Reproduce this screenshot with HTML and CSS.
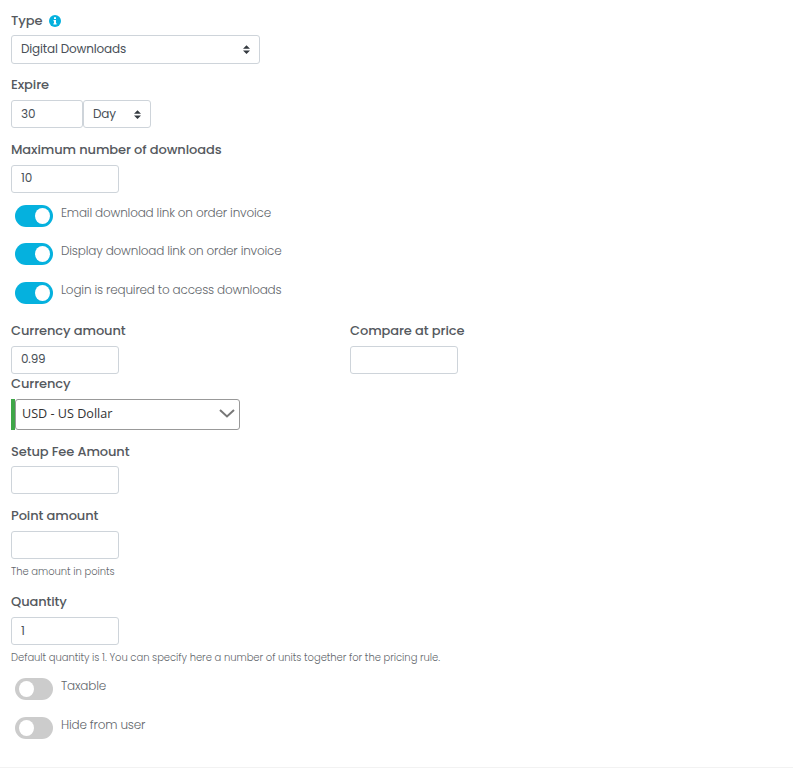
FILE: index.html
```
<!DOCTYPE html>
<html lang="en">
<head>
    <meta charset="UTF-8">
    <meta name="viewport" content="width=device-width, initial-scale=1.0">
    <title>Product Pricing</title>
    <link rel="stylesheet" href="styles.css">
</head>
<body>
    <form class="pricing-form">
        <div class="form-group">
            <label class="title type-title" for="type">Type
                <svg class="info" viewBox="0 0 12 12">
                    <circle cx="6" cy="6" r="6" fill="#05b1de"/>
                    <path d="M5 2.3h2v1.8H5zM4.5 5H7v3.2h.6v1.2H4.4V8.2H5v-2h-.5z" fill="#fff"/>
                </svg>
            </label>
            <div class="select type-select" id="type">
                <span>Digital Downloads</span>
                <svg class="arrows" viewBox="0 0 8 10"><path d="M4 0L8 4H0zM0 6h8L4 10z"/></svg>
            </div>
        </div>

        <div class="form-group expire">
            <label class="title" for="expire">Expire</label>
            <div class="input-row">
                <input type="text" class="small" id="expire" value="30">
                <div class="select day-select">
                    <span>Day</span>
                    <svg class="arrows" viewBox="0 0 8 10"><path d="M4 0L8 4H0zM0 6h8L4 10z"/></svg>
                </div>
            </div>
        </div>

        <div class="form-group">
            <label class="title" for="maxDownloads">Maximum number of downloads</label>
            <input type="text" class="raised" id="maxDownloads" value="10">
        </div>

        <div class="switches">
            <label class="switch-row"><span class="switch on"></span>Email download link on order invoice</label>
            <label class="switch-row"><span class="switch on"></span>Display download link on order invoice</label>
            <label class="switch-row"><span class="switch on"></span>Login is required to access downloads</label>
        </div>

        <div class="columns">
            <div class="column">
                <label class="title" for="amount">Currency amount</label>
                <input type="text" class="raised" id="amount" value="0.99">
            </div>
            <div class="column">
                <label class="title" for="compare">Compare at price</label>
                <input type="text" id="compare">
            </div>
        </div>

        <div class="form-group">
            <label class="title" for="currency">Currency</label>
            <div class="combo" id="currency">
                <div class="combo-box">
                    <span>USD - US Dollar</span>
                    <svg class="chevron" viewBox="0 0 16 9"><path d="M1 1l7 6.5L15 1"/></svg>
                </div>
            </div>
        </div>

        <div class="form-group setup">
            <label class="title setup-title" for="setupFee">Setup Fee Amount</label>
            <input type="text" id="setupFee">
        </div>

        <div class="form-group">
            <label class="title" for="points">Point amount</label>
            <input type="text" id="points">
            <small>The amount in points</small>
        </div>

        <div class="form-group">
            <label class="title" for="quantity">Quantity</label>
            <input type="text" id="quantity" value="1">
            <small>Default quantity is 1. You can specify here a number of units together for the pricing rule.</small>
        </div>

        <div class="switches bottom">
            <label class="switch-row"><span class="switch"></span>Taxable</label>
            <label class="switch-row"><span class="switch"></span>Hide from user</label>
        </div>
    </form>
</body>
</html>
```

FILE: styles.css
```
* {
    box-sizing: border-box;
}

body {
    margin: 0;
    background-color: #fff;
    font-family: Poppins, Inter, sans-serif;
    font-size: 12px;
    font-weight: 300;
    color: #63676c;
}

.pricing-form {
    height: 768px;
    padding: 10px 11px 0;
    border-bottom: 1px solid #f2f2f2;
}

.title {
    display: flex;
    align-items: center;
    height: 20px;
    margin-bottom: 5px;
    font-size: 13px;
    font-weight: 500;
    letter-spacing: -0.1px;
    color: #55595e;
    white-space: nowrap;
}

.type-title, .setup-title {
    padding-top: 2px;
}

.info {
    width: 12px;
    height: 12px;
    margin-left: 7px;
}

input, .select {
    display: flex;
    align-items: center;
    width: 108px;
    height: 28px;
    padding: 0 9px 1px;
    border: 1px solid #ced4da;
    border-radius: 3px;
    background-color: #fff;
    font-family: inherit;
    font-size: 12px;
    font-weight: 400;
    letter-spacing: -0.17px;
    color: #495057;
}

input.raised {
    padding-bottom: 2px;
}

.select {
    justify-content: space-between;
}

.type-select {
    width: 249px;
    height: 29px;
}

.day-select {
    width: 68px;
    padding-bottom: 0;
}

.arrows {
    width: 7px;
    height: 9px;
    fill: #343a40;
}

.expire {
    margin: 11px 0 12px;
}

.input-row {
    display: flex;
}

.input-row .small {
    width: 72px;
    padding-bottom: 0;
}

.switches {
    height: 128px;
    padding: 12px 4px 0;
}

.switch-row {
    display: flex;
    height: 38px;
    white-space: nowrap;
    line-height: 15px;
    letter-spacing: -0.18px;
}

.switch-row:nth-child(2) {
    height: 39px;
}

.switch {
    flex: none;
    width: 38px;
    height: 22px;
    margin-right: 8px;
    padding: 3px 4px;
    border-radius: 11px;
    background-color: #ccc;
}

.switch::before {
    content: "";
    display: block;
    width: 15px;
    height: 16px;
    border-radius: 50%;
    background-color: #fff;
}

.switch.on {
    background-color: #05b1de;
}

.switch.on::before {
    margin-left: 16px;
}

.columns {
    display: flex;
}

.column {
    width: 339px;
}

.combo {
    width: 229px;
    height: 31px;
    border-left: 4px solid #3fa648;
}

.combo-box {
    display: flex;
    align-items: center;
    justify-content: space-between;
    height: 31px;
    padding: 0 4px 2px 6px;
    border: 1px solid #999;
    border-radius: 3px;
    font-family: "Open Sans", sans-serif;
    font-size: 12.6px;
    font-weight: 400;
    color: #333;
}

.chevron {
    width: 16px;
    height: 9px;
    fill: none;
    stroke: #777;
    stroke-width: 2;
}

.setup {
    margin: 11px 0 12px;
}

small {
    display: block;
    height: 33px;
    padding-top: 5px;
    font-size: 10px;
    line-height: 15px;
    letter-spacing: -0.05px;
    white-space: nowrap;
}

.bottom {
    padding-top: 0;
}

.bottom .switch-row {
    height: 39px;
}
```
